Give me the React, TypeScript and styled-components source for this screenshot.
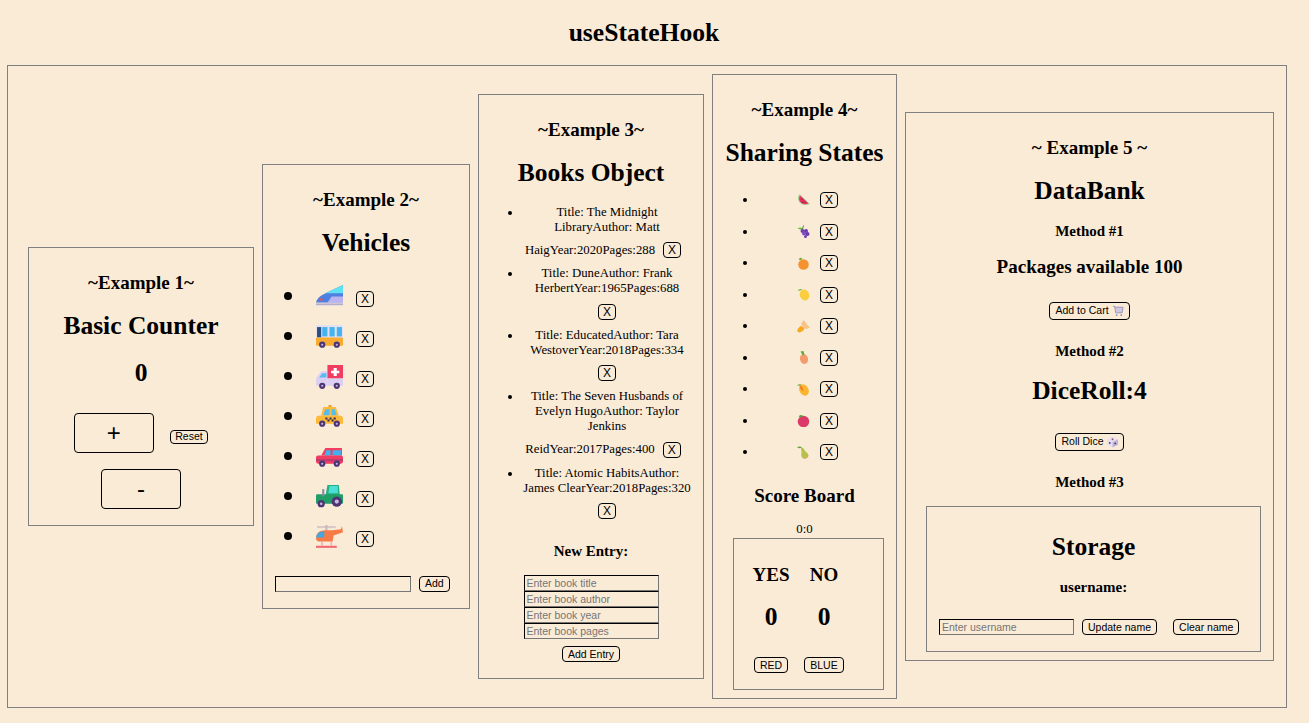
import React, { useState } from "react";
import styled, { createGlobalStyle } from "styled-components";

const GlobalStyle = createGlobalStyle`
  html, body { margin: 0; padding: 0; background: #faebd7; }
  body { font-family: "Liberation Serif", "Times New Roman", serif; color: #000; height: 723px; overflow: hidden; }
  button { font-family: "Liberation Sans", Arial, sans-serif; }
`;

const Page = styled.main`
  padding: 0 22px 0 7px;
`;

const Title = styled.h1`
  box-sizing: border-box;
  font-size: 25.6px;
  height: 65px;
  line-height: 30px;
  margin: 0;
  padding: 18px 6px 0 0;
  text-align: center;
`;

const Board = styled.section`
  align-items: center;
  border: 1px solid #808080;
  box-sizing: border-box;
  display: flex;
  gap: 8px;
  height: 643px;
  padding: 0 0 1px 20px;
  width: 1280px;
`;

const Card = styled.article<{ $w: number; $h: number; $pad?: string }>`
  border: 1px solid #808080;
  box-sizing: border-box;
  flex: none;
  height: ${p => p.$h}px;
  padding: ${p => p.$pad || "0 12px"};
  text-align: center;
  width: ${p => p.$w}px;
`;

const Label = styled.h3<{ $top?: number }>`
  font-size: 19px;
  line-height: 20px;
  margin: ${p => p.$top ?? 25}px 0 0;
`;

const Heading = styled.h2<{ $top?: number }>`
  font-size: 25.5px;
  line-height: 28px;
  margin: ${p => p.$top ?? 19}px 0 0;
`;

const SmallHead = styled.h4<{ $top?: number }>`
  font-size: 15px;
  line-height: 18px;
  margin: ${p => p.$top ?? 20}px 0 0;
`;

const Big = styled.button`
  background: #faebd7;
  border: 1px solid #000;
  border-radius: 4px;
  color: #000;
  font-size: 24px;
  height: 40px;
  padding: 0;
  width: 80px;
`;

const Tiny = styled.button<{ $mx?: number; $h?: number }>`
  background: #faebd7;
  border: 1px solid #000;
  border-radius: 4px;
  color: #000;
  font-size: 10.5px;
  height: ${p => p.$h ?? 16}px;
  line-height: 1;
  margin: 0 ${p => p.$mx ?? 0}px;
  padding: 0 5px;
  vertical-align: middle;
`;

const XButton = styled(Tiny)`
  font-size: 12px;
  padding: 0;
  width: 18px;
`;

const ResetButton = styled(Tiny)`
  margin-top: 8px;
  padding: 0 4.5px;
`;

const CounterRow = styled.div`
  align-items: center;
  display: flex;
  gap: 16px;
  justify-content: center;
  margin-top: 26px;
`;

const MinusRow = styled.div`
  margin-top: 16px;
`;

const Count = styled.div`
  font-size: 25.5px;
  font-weight: bold;
  line-height: 28px;
  margin-top: 19px;
`;

const VehicleList = styled.ul`
  list-style: none;
  margin: 22px 0 0;
  padding: 0;
`;

const VehicleItem = styled.li`
  align-items: center;
  display: flex;
  height: 40px;
  padding-left: 9px;
  &::before {
    background: #000;
    border-radius: 50%;
    content: "";
    height: 8px;
    margin-right: 24px;
    margin-top: -6px;
    width: 8px;
  }
  svg { margin-right: 13px; }
`;

const AddRow = styled.div`
  align-items: center;
  display: flex;
  gap: 6px;
  margin-top: 17px;
`;

const TextBox = styled.input<{ $w: number }>`
  background: #faebd7;
  border: 1px solid #000;
  border-bottom-color: #767676;
  border-right-color: #767676;
  box-sizing: border-box;
  font-family: "Liberation Sans", Arial, sans-serif;
  font-size: 10.5px;
  height: 16px;
  padding: 1px 2px;
  width: ${p => p.$w}px;
  &::placeholder { color: #757575; }
`;

const BookList = styled.ul`
  font-size: 12.8px;
  line-height: 15px;
  margin: 18px 0 0;
  padding: 0 0 0 31px;
  text-align: center;
  width: 170px;
`;

const BookItem = styled.li`
  button { margin: 7.75px 8px; }
`;

const Stack = styled.div`
  align-items: center;
  display: flex;
  flex-direction: column;
  margin-top: 15px;
`;

const AddEntry = styled(Tiny)`
  margin-top: 7px;
`;

const FruitList = styled.ul`
  list-style: none;
  margin: 18px 0 0;
  padding: 0;
`;

const FruitItem = styled.li`
  align-items: center;
  display: flex;
  height: 31.5px;
  padding-left: 30px;
  &::before {
    background: #000;
    border-radius: 50%;
    content: "";
    height: 4px;
    margin-right: 50px;
    width: 4px;
  }
  svg { margin-right: 10px; }
`;

const ScoreText = styled.div`
  font-size: 12.8px;
  line-height: 14px;
  margin-top: 16px;
`;

const ScoreBox = styled.div`
  border: 1px solid #808080;
  box-sizing: border-box;
  height: 152px;
  margin: 2px 0 0 20px;
  width: 151px;
`;

const ScoreGrid = styled.div`
  column-gap: 3px;
  display: grid;
  grid-template-columns: 50px 50px;
  justify-items: center;
  padding: 26px 0 0 12px;
`;

const Side = styled.div`
  font-size: 19px;
  font-weight: bold;
  line-height: 20px;
`;

const SideCount = styled.div`
  font-size: 25.5px;
  font-weight: bold;
  line-height: 28px;
  margin-top: 18px;
`;

const SideButton = styled(Tiny)`
  margin-top: 26px;
`;

const ActionRow = styled.div<{ $top: number }>`
  margin-top: ${p => p.$top}px;
`;

const Storage = styled.div`
  border: 1px solid #808080;
  box-sizing: border-box;
  height: 146px;
  margin: 15px 0 0 8px;
  width: 335px;
`;

const StorageRow = styled.div`
  align-items: center;
  display: flex;
  margin: 23px 0 0 12px;
`;

const InlineIcon = styled.svg`
  margin-left: 3px;
  vertical-align: -3px;
`;

const Svg = ({ s, children }: { s: number; children: React.ReactNode }) => (
  <svg width={s} height={s} viewBox="0 0 26 26">
    {children}
  </svg>
);

const wheels = (a = 7, b = 20, y = 21, r = 3) => (
  <>
    <circle cx={a} cy={y} r={r} fill="#4b3573" />
    <circle cx={a} cy={y} r={r / 3} fill="#c9b8e0" />
    <circle cx={b} cy={y} r={r} fill="#4b3573" />
    <circle cx={b} cy={y} r={r / 3} fill="#c9b8e0" />
  </>
);

const vehicles: React.ReactNode[] = [
  <>
    <path d="M0 17C1 11 9 8 15 5L26 0V17H0Z" fill="#4f7fe0" />
    <path d="M9 8L26 0V8H18Z" fill="#5fe2f2" />
    <path d="M15 11H26V17H11Z" fill="#b9b4f0" />
    <circle cx="5" cy="14" r="1.3" fill="#f0553f" />
    <rect x="0" y="17" width="26" height="3" fill="#e2d8e0" />
    <rect x="0" y="18" width="26" height="1" fill="#a79ec0" />
  </>,
  <>
    <rect x="0" y="0" width="26" height="13" rx="1" fill="#e4e0f0" />
    <rect x="1" y="2" width="4" height="10" fill="#2c4f80" />
    <rect x="6" y="2" width="5" height="9" fill="#45b4ee" />
    <rect x="13" y="2" width="5" height="9" fill="#45b4ee" />
    <rect x="20" y="2" width="5" height="9" fill="#45b4ee" />
    <rect x="0" y="12" width="26" height="8" rx="1" fill="#f8ab30" />
    {wheels(6, 20, 19)}
  </>,
  <>
    <path d="M0 13L5 6H11V20H0Z" fill="#dcd0f2" />
    <path d="M3 12L6 8H10V12Z" fill="#55bdf0" />
    <rect x="11" y="0" width="15" height="13" fill="#f03e62" />
    <rect x="11" y="13" width="15" height="7" fill="#dcd0f2" />
    <path d="M17 3H20V5.5H22.5V8H20V10.5H17V8H14.5V5.5H17Z" fill="#fff" />
    {wheels(6, 20, 20)}
  </>,
  <>
    <rect x="12" y="0" width="3" height="3" fill="#f0a030" />
    <path d="M7 2H19L22 10H5Z" fill="#fdb93a" />
    <path d="M9 4H13V10H7ZM15 4H18L20 10H15Z" fill="#52bdf0" />
    <path d="M0 13Q0 10 4 10H22Q26 10 26 13V18H0Z" fill="#fdb93a" />
    <path d="M9 12H11V14H9ZM13 12H15V14H13ZM17 12H19V14H17ZM11 14H13V16H11ZM15 14H17V16H15Z" fill="#3b2d57" />
    {wheels(6, 20, 18)}
  </>,
  <>
    <path d="M5 10L9 3H25V10Z" fill="#f03e62" />
    <path d="M10 5H14V10H8ZM16 5H24V10H16Z" fill="#3fb2f2" />
    <rect x="0" y="10" width="26" height="8" rx="2" fill="#ee3d60" />
    <rect x="0" y="14" width="26" height="1" fill="#8f3a80" />
    {wheels(6, 20, 18)}
  </>,
  <>
    <path d="M11 0H22L23 11H9Z" fill="#25b081" />
    <path d="M13 1H21V8H12Z" fill="#4ae0d8" />
    <rect x="0" y="9" width="26" height="9" rx="1" fill="#1f9e68" />
    <rect x="6" y="4" width="2" height="7" fill="#8b88a0" />
    <circle cx="5" cy="18" r="3.5" fill="#4b3573" />
    <circle cx="5" cy="18" r="1.2" fill="#c9b8e0" />
    <circle cx="20" cy="16" r="5" fill="#4b3573" />
    <circle cx="20" cy="16" r="2" fill="#c9b8e0" />
  </>,
  <>
    <rect x="1" y="1" width="18" height="2" fill="#d8c8c8" />
    <rect x="9" y="0" width="2" height="7" fill="#c8b8b8" />
    <path d="M0 13Q0 5 9 5H16L24 4L25 1L26 7L17 10L16 16H4Q0 16 0 13Z" fill="#f77b46" />
    <path d="M0 12Q1 6 8 6V12Z" fill="#45a5e0" />
    <rect x="0" y="20" width="20" height="2" fill="#f06a70" />
    <path d="M5 16L5 20H6.5L6.5 16ZM14 16V20H15.5V16Z" fill="#e8b0b0" />
  </>,
];

const fruits: React.ReactNode[] = [
  <>
    <path d="M5 0C-4 12 8 28 26 20Z" fill="#a8d59a" />
    <path d="M6 3C0 12 10 25 23 19Z" fill="#ec2f5c" />
    <circle cx="10" cy="10" r="1.2" fill="#3a2048" />
    <circle cx="11" cy="16" r="1.2" fill="#3a2048" />
    <circle cx="16" cy="16" r="1.2" fill="#3a2048" />
  </>,
  <>
    <path d="M1 7Q7 3 13 8L9 10Z" fill="#7cbf3a" />
    <path d="M11 8L13 1" stroke="#3f8a3a" strokeWidth="2" />
    <circle cx="11" cy="12" r="4" fill="#7040b0" />
    <circle cx="18" cy="12" r="4" fill="#6a3cb0" />
    <circle cx="14" cy="17" r="4" fill="#7f4cc0" />
    <circle cx="21" cy="18" r="4" fill="#6a3cb0" />
    <circle cx="17" cy="23" r="3" fill="#7040b0" />
  </>,
  <>
    <circle cx="13" cy="15" r="10.5" fill="#f79230" />
    <path d="M3 5Q7 -1 11 4Q8 7 3 5Z" fill="#6fae3a" />
  </>,
  <>
    <ellipse cx="15" cy="14" rx="9.5" ry="11" fill="#fbce3f" transform="rotate(-20 15 14)" />
    <path d="M1 5Q5 0 11 3Q7 6 1 5Z" fill="#74b83c" />
  </>,
  <>
    <path d="M13 0L16 3L20 9L26 15L20 18L13 16L8 8Z" fill="#f9c287" />
    <path d="M0 22Q4 12 9 12L15 17Q12 24 4 25Z" fill="#f7a81f" />
  </>,
  <>
    <ellipse cx="14" cy="16" rx="8" ry="10" fill="#f49b6c" transform="rotate(-15 14 16)" />
    <path d="M7 1L11 8H15L13 0Z" fill="#5da83e" />
  </>,
  <>
    <ellipse cx="14" cy="14" rx="9" ry="12" fill="#fbb62d" transform="rotate(-28 14 14)" />
    <path d="M5 4Q12 5 13 17Q5 12 5 4Z" fill="#f37c2c" />
    <path d="M0 5Q5 0 9 3Q5 6 0 5Z" fill="#6fae3a" />
  </>,
  <>
    <circle cx="13" cy="15" r="11.5" fill="#dc3a66" />
    <path d="M3 5Q8 0 12 4L9 7Z" fill="#4da83c" />
  </>,
  <>
    <path d="M8 4C12 2 15 7 17 11C23 14 25 22 18 25C11 26 7 22 9 14C9 10 8 7 8 4Z" fill="#b7c24c" />
    <path d="M11 25C16 26 24 24 23 17C21 22 16 24 11 25Z" fill="#d9a070" />
    <path d="M0 3Q5 -1 10 3Q5 6 0 3Z" fill="#5fa83c" />
  </>,
];

const Cart = () => (
  <InlineIcon width="12" height="13" viewBox="0 0 13 13">
    <path d="M1 2H3L4 9H11L12 3H3" fill="#cfc8e4" stroke="#9a93b8" />
    <circle cx="5" cy="11.5" r="1" fill="#8f8ab0" />
    <circle cx="10" cy="11.5" r="1" fill="#8f8ab0" />
  </InlineIcon>
);

const Dice = () => (
  <InlineIcon width="11" height="12" viewBox="0 0 12 12">
    <path d="M6 0L12 3V9L6 12L0 9V3Z" fill="#e6e0f2" />
    <path d="M6 6L12 3V9L6 12Z" fill="#bfb5d8" />
    <circle cx="6" cy="3" r="1" fill="#a05070" />
    <circle cx="3" cy="7" r="1" fill="#4b3573" />
    <circle cx="9" cy="7.5" r="1" fill="#4b3573" />
  </InlineIcon>
);

const books = [
  "Title: The Midnight LibraryAuthor: Matt HaigYear:2020Pages:288",
  "Title: DuneAuthor: Frank HerbertYear:1965Pages:688",
  "Title: EducatedAuthor: Tara WestoverYear:2018Pages:334",
  "Title: The Seven Husbands of Evelyn HugoAuthor: Taylor Jenkins ReidYear:2017Pages:400",
  "Title: Atomic HabitsAuthor: James ClearYear:2018Pages:320",
];

function App() {
  const [count, setCount] = useState(0);

  return (
    <Page>
      <GlobalStyle />
      <Title>useStateHook</Title>
      <Board>
        <Card $w={226} $h={279}>
          <Label>~Example 1~</Label>
          <Heading>Basic Counter</Heading>
          <Count>{count}</Count>
          <CounterRow>
            <Big onClick={() => setCount(c => c + 1)}>+</Big>
            <ResetButton $h={14} onClick={() => setCount(0)}>Reset</ResetButton>
          </CounterRow>
          <MinusRow>
            <Big onClick={() => setCount(c => c - 1)}>-</Big>
          </MinusRow>
        </Card>

        <Card $w={208} $h={445}>
          <Label>~Example 2~</Label>
          <Heading>Vehicles</Heading>
          <VehicleList>
            {vehicles.map((v, i) => (
              <VehicleItem key={i}>
                <Svg s={27}>{v}</Svg>
                <XButton>X</XButton>
              </VehicleItem>
            ))}
          </VehicleList>
          <AddRow>
            <TextBox $w={136} />
            <Tiny $mx={2}>Add</Tiny>
          </AddRow>
        </Card>

        <Card $w={226} $h={585}>
          <Label>~Example 3~</Label>
          <Heading>Books Object</Heading>
          <BookList>
            {books.map(b => (
              <BookItem key={b}>
                {b}
                <XButton>X</XButton>
              </BookItem>
            ))}
          </BookList>
          <SmallHead $top={15}>New Entry:</SmallHead>
          <Stack>
            <TextBox $w={135} placeholder="Enter book title" />
            <TextBox $w={135} placeholder="Enter book author" />
            <TextBox $w={135} placeholder="Enter book year" />
            <TextBox $w={135} placeholder="Enter book pages" />
            <AddEntry>Add Entry</AddEntry>
          </Stack>
        </Card>

        <Card $w={185} $h={625} $pad="0">
          <Label>~Example 4~</Label>
          <Heading>Sharing States</Heading>
          <FruitList>
            {fruits.map((f, i) => (
              <FruitItem key={i}>
                <Svg s={13}>{f}</Svg>
                <XButton>X</XButton>
              </FruitItem>
            ))}
          </FruitList>
          <Label $top={18}>Score Board</Label>
          <ScoreText>0:0</ScoreText>
          <ScoreBox>
            <ScoreGrid>
              <Side>YES</Side>
              <Side>NO</Side>
              <SideCount>0</SideCount>
              <SideCount>0</SideCount>
              <SideButton>RED</SideButton>
              <SideButton>BLUE</SideButton>
            </ScoreGrid>
          </ScoreBox>
        </Card>

        <Card $w={369} $h={549}>
          <Label>~ Example 5 ~</Label>
          <Heading>DataBank</Heading>
          <SmallHead $top={17}>Method #1</SmallHead>
          <Label $top={17}>Packages available 100</Label>
          <ActionRow $top={24}>
            <Tiny $h={18}>Add to Cart<Cart /></Tiny>
          </ActionRow>
          <SmallHead $top={22}>Method #2</SmallHead>
          <Heading $top={17}>DiceRoll:4</Heading>
          <ActionRow $top={27}>
            <Tiny $h={18}>Roll Dice<Dice /></Tiny>
          </ActionRow>
          <SmallHead $top={22}>Method #3</SmallHead>
          <Storage>
            <Heading $top={26}>Storage</Heading>
            <SmallHead $top={17}>username:</SmallHead>
            <StorageRow>
              <TextBox $w={135} placeholder="Enter username" />
              <Tiny $mx={8}>Update name</Tiny>
              <Tiny $mx={8}>Clear name</Tiny>
            </StorageRow>
          </Storage>
        </Card>
      </Board>
    </Page>
  );
}

export default App;
